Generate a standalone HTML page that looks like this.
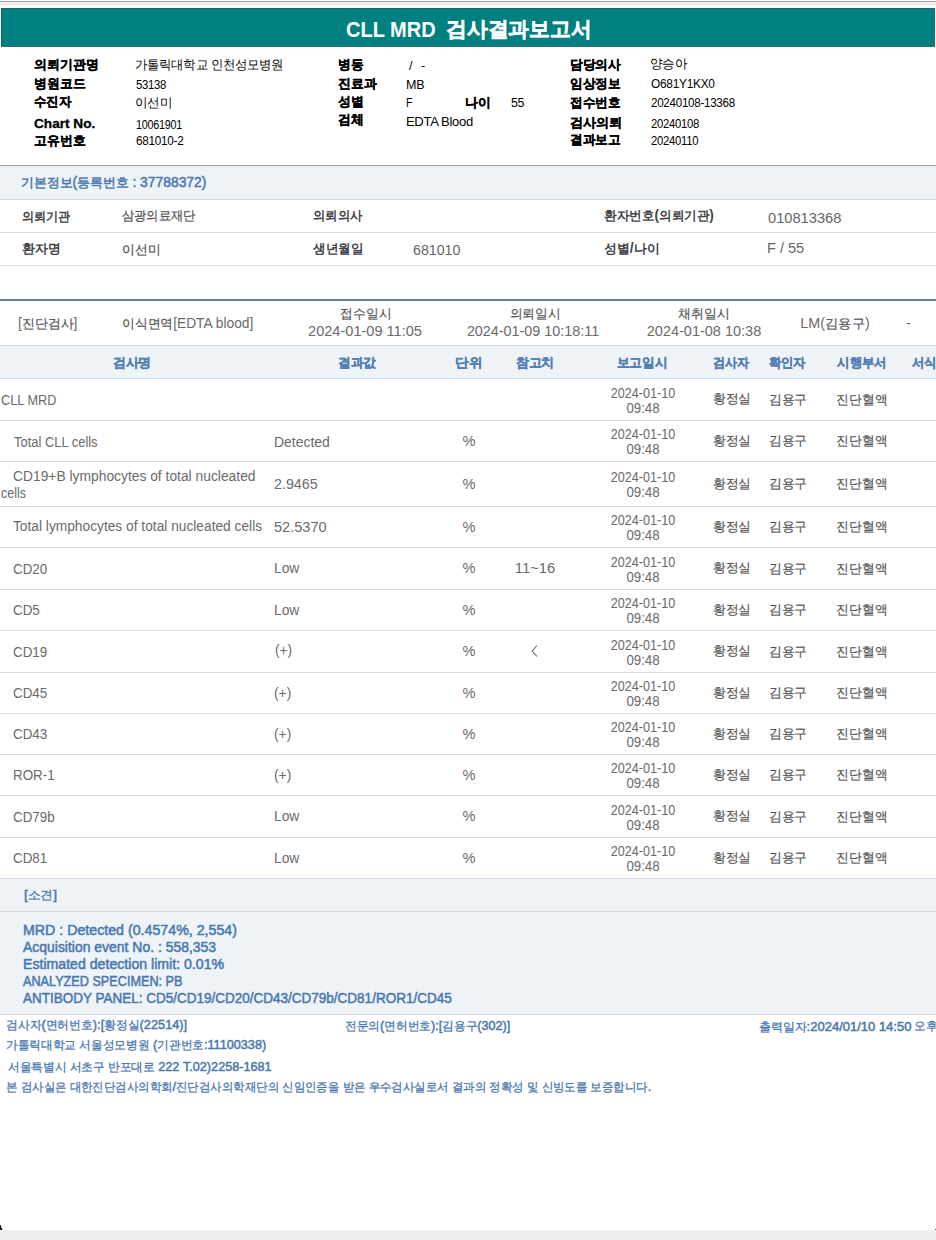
<!DOCTYPE html>
<html><head><meta charset="utf-8">
<style>
html,body{margin:0;padding:0;background:#fff;width:936px;height:1240px;overflow:hidden;position:relative;font-family:"Liberation Sans",sans-serif;}
.a{position:absolute;white-space:nowrap;}
.ln{position:absolute;left:0;width:936px;height:1px;}
.bg{position:absolute;left:0;width:936px;background:#eef3f8;}
.s1{font-size:12.5px;line-height:14px;color:#000;}
.s1.b{font-weight:bold;-webkit-text-stroke:0.3px #000;}
.s1.v{font-size:12.5px;letter-spacing:-0.3px;}
.s2{font-size:14px;line-height:15px;}
.s2 .k{font-size:13px;}
.s2.hd{color:#4a78b0;font-weight:normal;font-size:14px;-webkit-text-stroke:0.5px #4a78b0;}
.s2.hd .k{font-size:13px;}
.s2.lb{color:#404349;font-weight:bold;}
.s2.vl{color:#666;}
.s2.vl .k{color:#555;-webkit-text-stroke:0.25px #555;}
.tb{font-size:14px;line-height:15px;color:#6a6a6a;}
.tb .k{font-size:13px;color:#555;-webkit-text-stroke:0.2px #555;}
.th{font-size:13px;line-height:15px;color:#5580b5;font-weight:bold;-webkit-text-stroke:0.3px #5580b5;}
.sgt{font-size:14px;line-height:17px;color:#4a78b0;font-weight:normal;-webkit-text-stroke:0.5px #4a78b0;}
.ft{font-size:13px;line-height:15px;color:#4a78b0;font-weight:normal;-webkit-text-stroke:0.5px #4a78b0;}
.ft .k{font-size:12px;font-weight:normal;-webkit-text-stroke:0.3px #4a78b0;}
.tt{font-size:21px;line-height:24px;color:#fff;font-weight:bold;}
</style></head><body>
<div class="a" style="left:0;top:1px;width:936px;height:1px;background:#a6a6a6"></div>
<div class="a" style="left:0;top:2px;width:936px;height:4px;background:#eef0f0"></div>
<div class="a" style="left:1px;top:8px;width:934px;height:39px;background:#008080;box-shadow:inset 1px 1px 0 #0a6a6c, inset -1px -1px 0 #2a7070"></div>
<div class="bg" style="top:166px;height:33px"></div>
<div class="a" style="left:0;top:166px;width:936px;height:2px;background:#eceeef"></div>
<div class="bg" style="top:346px;height:32px"></div>
<div class="bg" style="top:879px;height:135px"></div>
<div class="a" style="left:0;top:299px;width:936px;height:2px;background:#64809e"></div>
<div class="a" style="left:0;top:1230px;width:936px;height:10px;background:#efefef"></div>
<div class="ln" style="top:165px;background:#a0a0a0"></div>
<div class="ln" style="top:199px;background:#d3d9e0"></div>
<div class="ln" style="top:232px;background:#dcdcdc"></div>
<div class="ln" style="top:265px;background:#dcdcdc"></div>
<div class="ln" style="top:345px;background:#d3d9e0"></div>
<div class="ln" style="top:378px;background:#d3d9e0"></div>
<div class="ln" style="top:878px;background:#d3d9e0"></div>
<div class="ln" style="top:911px;background:#d3d9e0"></div>
<div class="ln" style="top:1014px;background:#d3d9e0"></div>
<div class="ln" style="top:420px;background:#dcdcdc"></div>
<div class="ln" style="top:461px;background:#dcdcdc"></div>
<div class="ln" style="top:506px;background:#dcdcdc"></div>
<div class="ln" style="top:547px;background:#dcdcdc"></div>
<div class="ln" style="top:589px;background:#dcdcdc"></div>
<div class="ln" style="top:630px;background:#dcdcdc"></div>
<div class="ln" style="top:672px;background:#dcdcdc"></div>
<div class="ln" style="top:713px;background:#dcdcdc"></div>
<div class="ln" style="top:754px;background:#dcdcdc"></div>
<div class="ln" style="top:795px;background:#dcdcdc"></div>
<div class="ln" style="top:837px;background:#dcdcdc"></div>
<div id="tt1" class="a tt" style="left:346.12px;top:18.08px;transform:scaleX(0.9099);transform-origin:0 50%;font-size:22px;">CLL MRD</div>
<div id="tt2" class="a tt" style="left:445.8px;top:17.04px;transform:scaleX(0.9903);transform-origin:0 50%;-webkit-text-stroke:0.5px #fff;"><span class="k">검사결과보고서</span></div>
<div id="s1l0" class="a s1 b" style="left:33.88px;top:57.76px;transform:scaleX(0.9921);transform-origin:0 50%;"><span class="k">의뢰기관명</span></div>
<div id="s1l1" class="a s1 b" style="left:33.88px;top:76.52px;transform:scaleX(0.9913);transform-origin:0 50%;"><span class="k">병원코드</span></div>
<div id="s1l2" class="a s1 b" style="left:33.88px;top:95.44px;transform:scaleX(0.9593);transform-origin:0 50%;"><span class="k">수진자</span></div>
<div id="s1l3" class="a s1 b" style="left:33.88px;top:116.56px;transform:scaleX(1.0900);transform-origin:0 50%;">Chart No.</div>
<div id="s1l4" class="a s1 b" style="left:33.88px;top:133.88px;transform:scaleX(0.9913);transform-origin:0 50%;"><span class="k">고유번호</span></div>
<div id="s1l5" class="a s1 b" style="left:337.6px;top:58.0px;transform:scaleX(0.9843);transform-origin:0 50%;"><span class="k">병동</span></div>
<div id="s1l6" class="a s1 b" style="left:337.6px;top:76.52px;transform:scaleX(0.9894);transform-origin:0 50%;"><span class="k">진료과</span></div>
<div id="s1l7" class="a s1 b" style="left:337.6px;top:95.44px;transform:scaleX(0.9924);transform-origin:0 50%;"><span class="k">성별</span></div>
<div id="s1l8" class="a s1 b" style="left:337.6px;top:113.24px;transform:scaleX(0.9859);transform-origin:0 50%;"><span class="k">검체</span></div>
<div id="s1l9" class="a s1 b" style="left:464.6px;top:96.0px;transform:scaleX(0.9840);transform-origin:0 50%;"><span class="k">나이</span></div>
<div id="s1l10" class="a s1 b" style="left:569.84px;top:58.0px;transform:scaleX(0.9751);transform-origin:0 50%;"><span class="k">담당의사</span></div>
<div id="s1l11" class="a s1 b" style="left:569.84px;top:76.92px;transform:scaleX(0.9747);transform-origin:0 50%;"><span class="k">임상정보</span></div>
<div id="s1l12" class="a s1 b" style="left:569.84px;top:95.84px;transform:scaleX(0.9747);transform-origin:0 50%;"><span class="k">접수번호</span></div>
<div id="s1l13" class="a s1 b" style="left:569.84px;top:115.84px;transform:scaleX(1.0124);transform-origin:0 50%;"><span class="k">검사의뢰</span></div>
<div id="s1l14" class="a s1 b" style="left:569.84px;top:133.04px;transform:scaleX(0.9731);transform-origin:0 50%;"><span class="k">결과보고</span></div>
<div id="s1v0" class="a s1 v" style="left:135.0px;top:58.04px;transform:scaleX(0.9541);transform-origin:0 50%;"><span class="k">가톨릭대학교 인천성모병원</span></div>
<div id="s1v1" class="a s1 v" style="left:135.8px;top:77.56px;transform:scaleX(0.9062);transform-origin:0 50%;">53138</div>
<div id="s1v2" class="a s1 v" style="left:135.0px;top:95.68px;transform:scaleX(0.9706);transform-origin:0 50%;"><span class="k">이선미</span></div>
<div id="s1v3" class="a s1 v" style="left:135.8px;top:117.64px;transform:scaleX(0.8644);transform-origin:0 50%;">10061901</div>
<div id="s1v4" class="a s1 v" style="left:135.8px;top:134.2px;transform:scaleX(0.9400);transform-origin:0 50%;">681010-2</div>
<div id="s1v5" class="a s1 v" style="left:409.12px;top:58.68px;transform-origin:0 50%;letter-spacing:2.5px;">/ -</div>
<div id="s1v6" class="a s1 v" style="left:406.12px;top:77.76px;transform:scaleX(1.0023);transform-origin:0 50%;">MB</div>
<div id="s1v7" class="a s1 v" style="left:406.12px;top:96.04px;transform:scaleX(0.8571);transform-origin:0 50%;">F</div>
<div id="s1v8" class="a s1 v" style="left:511.16px;top:96.04px;transform:scaleX(0.9887);transform-origin:0 50%;">55</div>
<div id="s1v9" class="a s1 v" style="left:406.12px;top:115.08px;transform:scaleX(1.0419);transform-origin:0 50%;">EDTA Blood</div>
<div id="s1v10" class="a s1 v" style="left:649.52px;top:57.0px;transform:scaleX(0.9662);transform-origin:0 50%;"><span class="k">양승아</span></div>
<div id="s1v11" class="a s1 v" style="left:651.12px;top:76.8px;transform:scaleX(0.9524);transform-origin:0 50%;">O681Y1KX0</div>
<div id="s1v12" class="a s1 v" style="left:651.12px;top:96.4px;transform:scaleX(0.9284);transform-origin:0 50%;">20240108-13368</div>
<div id="s1v13" class="a s1 v" style="left:651.12px;top:116.92px;transform:scaleX(0.9038);transform-origin:0 50%;">20240108</div>
<div id="s1v14" class="a s1 v" style="left:651.12px;top:134.4px;transform:scaleX(0.9038);transform-origin:0 50%;">20240110</div>
<div id="s2h" class="a s2 hd" style="left:21.2px;top:175.24px;transform:scaleX(0.9897);transform-origin:0 50%;"><span class="k">기본정보</span>(<span class="k">등록번호</span> : 37788372)</div>
<div id="s2a" class="a s2 lb" style="left:22.32px;top:209.12px;transform:scaleX(0.9349);transform-origin:0 50%;"><span class="k">의뢰기관</span></div>
<div id="s2b" class="a s2 vl" style="left:122.48px;top:208.0px;transform:scaleX(0.9410);transform-origin:0 50%;"><span class="k">삼광의료재단</span></div>
<div id="s2c" class="a s2 lb" style="left:312.8px;top:208.48px;transform:scaleX(0.9501);transform-origin:0 50%;"><span class="k">의뢰의사</span></div>
<div id="s2d" class="a s2 lb" style="left:603.64px;top:208.16px;transform:scaleX(0.9692);transform-origin:0 50%;"><span class="k">환자번호</span>(<span class="k">의뢰기관</span>)</div>
<div id="s2e" class="a s2 vl" style="left:767.84px;top:210.56px;transform:scaleX(1.0464);transform-origin:0 50%;">010813368</div>
<div id="s2f" class="a s2 lb" style="left:22.32px;top:241.48px;transform:scaleX(0.9890);transform-origin:0 50%;"><span class="k">환자명</span></div>
<div id="s2g" class="a s2 vl" style="left:121.68px;top:242.12px;transform:scaleX(0.9861);transform-origin:0 50%;"><span class="k">이선미</span></div>
<div id="s2h2" class="a s2 lb" style="left:312.8px;top:240.84px;transform:scaleX(0.9680);transform-origin:0 50%;"><span class="k">생년월일</span></div>
<div id="s2i" class="a s2 vl" style="left:413.0px;top:242.76px;transform:scaleX(1.0154);transform-origin:0 50%;">681010</div>
<div id="s2j" class="a s2 lb" style="left:603.64px;top:241.48px;transform:scaleX(0.9909);transform-origin:0 50%;"><span class="k">성별</span>/<span class="k">나이</span></div>
<div id="s2k" class="a s2 vl" style="left:767.04px;top:241.0px;transform:scaleX(1.0387);transform-origin:0 50%;">F / 55</div>
<div id="s3a" class="a tb" style="left:18.36px;top:315.52px;transform:scaleX(0.9937);transform-origin:0 50%;">[<span class="k">진단검사</span>]</div>
<div id="s3b" class="a tb" style="left:121.84px;top:315.52px;transform:scaleX(0.9839);transform-origin:0 50%;"><span class="k">이식면역</span>[EDTA blood]</div>
<div id="s3c1" class="a tb" style="left:366.26px;top:306.0px;transform:translateX(-50%) scaleX(0.9810);transform-origin:50% 50%;"><span class="k">접수일시</span></div>
<div id="s3c2" class="a tb" style="left:365.46px;top:324.4px;transform:translateX(-50%) scaleX(1.0397);transform-origin:50% 50%;">2024-01-09 11:05</div>
<div id="s3d1" class="a tb" style="left:535.2px;top:306.0px;transform:translateX(-50%) scaleX(0.9804);transform-origin:50% 50%;"><span class="k">의뢰일시</span></div>
<div id="s3d2" class="a tb" style="left:533.32px;top:324.4px;transform:translateX(-50%) scaleX(1.0254);transform-origin:50% 50%;">2024-01-09 10:18:11</div>
<div id="s3e1" class="a tb" style="left:704.06px;top:306.0px;transform:translateX(-50%) scaleX(0.9899);transform-origin:50% 50%;"><span class="k">채취일시</span></div>
<div id="s3e2" class="a tb" style="left:703.68px;top:324.4px;transform:translateX(-50%) scaleX(1.0358);transform-origin:50% 50%;">2024-01-08 10:38</div>
<div id="s3f" class="a tb" style="left:834.56px;top:316.0px;transform:translateX(-50%) scaleX(1.0249);transform-origin:50% 50%;">LM(<span class="k">김용구</span>)</div>
<div id="s3g" class="a tb" style="left:908.7px;top:316.0px;transform:translateX(-50%);transform-origin:50% 50%;">-</div>
<div id="th0" class="a th" style="left:132.36px;top:355.08px;transform:translateX(-50%) scaleX(0.9939);transform-origin:50% 50%;"><span class="k">검사명</span></div>
<div id="th1" class="a th" style="left:356.9px;top:355.48px;transform:translateX(-50%) scaleX(0.9751);transform-origin:50% 50%;"><span class="k">결과값</span></div>
<div id="th2" class="a th" style="left:469.48px;top:355.48px;transform:translateX(-50%) scaleX(1.0435);transform-origin:50% 50%;"><span class="k">단위</span></div>
<div id="th3" class="a th" style="left:534.88px;top:355.08px;transform:translateX(-50%) scaleX(0.9981);transform-origin:50% 50%;"><span class="k">참고치</span></div>
<div id="th4" class="a th" style="left:642.44px;top:355.48px;transform:translateX(-50%) scaleX(0.9778);transform-origin:50% 50%;"><span class="k">보고일시</span></div>
<div id="th5" class="a th" style="left:731.48px;top:355.08px;transform:translateX(-50%) scaleX(0.9296);transform-origin:50% 50%;"><span class="k">검사자</span></div>
<div id="th6" class="a th" style="left:787.0px;top:355.08px;transform:translateX(-50%) scaleX(0.9474);transform-origin:50% 50%;"><span class="k">확인자</span></div>
<div id="th7" class="a th" style="left:861.86px;top:355.08px;transform:translateX(-50%) scaleX(0.9579);transform-origin:50% 50%;"><span class="k">시행부서</span></div>
<div id="th8" class="a th" style="left:924px;top:355.08px;transform:translateX(-50%) scaleX(0.9579);transform-origin:50% 50%;"><span class="k">서식</span></div>
<div id="r0n" class="a tb" style="left:0.52px;top:392.78px;transform:scaleX(0.9113);transform-origin:0 50%;">CLL MRD</div>
<div id="r0d1" class="a tb" style="left:642.56px;top:385.52px;transform:translateX(-50%) scaleX(0.8995);transform-origin:50% 50%;">2024-01-10</div>
<div id="r0d2" class="a tb" style="left:642.88px;top:400.94px;transform:translateX(-50%) scaleX(0.9483);transform-origin:50% 50%;">09:48</div>
<div id="r0p1" class="a tb" style="left:731.8px;top:391.02px;transform:translateX(-50%) scaleX(0.9821);transform-origin:50% 50%;"><span class="k">황정실</span></div>
<div id="r0p2" class="a tb" style="left:787.8px;top:391.5px;transform:translateX(-50%) scaleX(0.9897);transform-origin:50% 50%;"><span class="k">김용구</span></div>
<div id="r0p3" class="a tb" style="left:862.24px;top:391.5px;transform:translateX(-50%) scaleX(0.9814);transform-origin:50% 50%;"><span class="k">진단혈액</span></div>
<div id="r1n" class="a tb" style="left:13.8px;top:434.76px;transform:scaleX(0.9234);transform-origin:0 50%;">Total CLL cells</div>
<div id="r1r" class="a tb" style="left:273.52px;top:435.08px;transform:scaleX(0.9947);transform-origin:0 50%;">Detected</div>
<div id="r1u" class="a tb" style="left:469.2px;top:433.96px;transform:translateX(-50%) scaleX(1.0402);transform-origin:50% 50%;">%</div>
<div id="r1d1" class="a tb" style="left:642.56px;top:427.02px;transform:translateX(-50%) scaleX(0.8995);transform-origin:50% 50%;">2024-01-10</div>
<div id="r1d2" class="a tb" style="left:642.88px;top:442.44px;transform:translateX(-50%) scaleX(0.9483);transform-origin:50% 50%;">09:48</div>
<div id="r1p1" class="a tb" style="left:731.8px;top:432.52px;transform:translateX(-50%) scaleX(0.9821);transform-origin:50% 50%;"><span class="k">황정실</span></div>
<div id="r1p2" class="a tb" style="left:787.8px;top:433.0px;transform:translateX(-50%) scaleX(0.9897);transform-origin:50% 50%;"><span class="k">김용구</span></div>
<div id="r1p3" class="a tb" style="left:862.24px;top:433.0px;transform:translateX(-50%) scaleX(0.9814);transform-origin:50% 50%;"><span class="k">진단혈액</span></div>
<div id="r2n" class="a tb" style="left:12.84px;top:468.96px;transform:scaleX(0.9877);transform-origin:0 50%;">CD19+B lymphocytes of total nucleated</div>
<div id="r2n2" class="a tb" style="left:1.0px;top:486.4px;transform:scaleX(0.8889);transform-origin:0 50%;">cells</div>
<div id="r2r" class="a tb" style="left:274.0px;top:477.44px;transform:scaleX(1.0204);transform-origin:0 50%;">2.9465</div>
<div id="r2u" class="a tb" style="left:469.2px;top:476.96px;transform:translateX(-50%) scaleX(1.0402);transform-origin:50% 50%;">%</div>
<div id="r2d1" class="a tb" style="left:642.56px;top:470.02px;transform:translateX(-50%) scaleX(0.8995);transform-origin:50% 50%;">2024-01-10</div>
<div id="r2d2" class="a tb" style="left:642.88px;top:485.44px;transform:translateX(-50%) scaleX(0.9483);transform-origin:50% 50%;">09:48</div>
<div id="r2p1" class="a tb" style="left:731.8px;top:475.52px;transform:translateX(-50%) scaleX(0.9821);transform-origin:50% 50%;"><span class="k">황정실</span></div>
<div id="r2p2" class="a tb" style="left:787.8px;top:476.0px;transform:translateX(-50%) scaleX(0.9897);transform-origin:50% 50%;"><span class="k">김용구</span></div>
<div id="r2p3" class="a tb" style="left:862.24px;top:476.0px;transform:translateX(-50%) scaleX(0.9814);transform-origin:50% 50%;"><span class="k">진단혈액</span></div>
<div id="r3n" class="a tb" style="left:12.84px;top:519.0px;transform:scaleX(0.9818);transform-origin:0 50%;">Total lymphocytes of total nucleated cells</div>
<div id="r3r" class="a tb" style="left:274.0px;top:520.28px;transform:scaleX(1.0408);transform-origin:0 50%;">52.5370</div>
<div id="r3u" class="a tb" style="left:469.2px;top:519.96px;transform:translateX(-50%) scaleX(1.0402);transform-origin:50% 50%;">%</div>
<div id="r3d1" class="a tb" style="left:642.56px;top:513.02px;transform:translateX(-50%) scaleX(0.8995);transform-origin:50% 50%;">2024-01-10</div>
<div id="r3d2" class="a tb" style="left:642.88px;top:528.44px;transform:translateX(-50%) scaleX(0.9483);transform-origin:50% 50%;">09:48</div>
<div id="r3p1" class="a tb" style="left:731.8px;top:518.52px;transform:translateX(-50%) scaleX(0.9821);transform-origin:50% 50%;"><span class="k">황정실</span></div>
<div id="r3p2" class="a tb" style="left:787.8px;top:519.0px;transform:translateX(-50%) scaleX(0.9897);transform-origin:50% 50%;"><span class="k">김용구</span></div>
<div id="r3p3" class="a tb" style="left:862.24px;top:519.0px;transform:translateX(-50%) scaleX(0.9814);transform-origin:50% 50%;"><span class="k">진단혈액</span></div>
<div id="r4n" class="a tb" style="left:12.84px;top:561.62px;transform:scaleX(0.9577);transform-origin:0 50%;">CD20</div>
<div id="r4r" class="a tb" style="left:273.52px;top:561.3px;transform:scaleX(0.9863);transform-origin:0 50%;">Low</div>
<div id="r4u" class="a tb" style="left:469.2px;top:561.46px;transform:translateX(-50%) scaleX(1.0402);transform-origin:50% 50%;">%</div>
<div id="r4f" class="a tb" style="left:535.12px;top:561.3px;transform:translateX(-50%) scaleX(1.0573);transform-origin:50% 50%;">11~16</div>
<div id="r4d1" class="a tb" style="left:642.56px;top:554.52px;transform:translateX(-50%) scaleX(0.8995);transform-origin:50% 50%;">2024-01-10</div>
<div id="r4d2" class="a tb" style="left:642.88px;top:569.94px;transform:translateX(-50%) scaleX(0.9483);transform-origin:50% 50%;">09:48</div>
<div id="r4p1" class="a tb" style="left:731.8px;top:560.02px;transform:translateX(-50%) scaleX(0.9821);transform-origin:50% 50%;"><span class="k">황정실</span></div>
<div id="r4p2" class="a tb" style="left:787.8px;top:560.5px;transform:translateX(-50%) scaleX(0.9897);transform-origin:50% 50%;"><span class="k">김용구</span></div>
<div id="r4p3" class="a tb" style="left:862.24px;top:560.5px;transform:translateX(-50%) scaleX(0.9814);transform-origin:50% 50%;"><span class="k">진단혈액</span></div>
<div id="r5n" class="a tb" style="left:12.84px;top:603.12px;transform:scaleX(0.9577);transform-origin:0 50%;">CD5</div>
<div id="r5r" class="a tb" style="left:273.52px;top:602.8px;transform:scaleX(0.9863);transform-origin:0 50%;">Low</div>
<div id="r5u" class="a tb" style="left:469.2px;top:602.96px;transform:translateX(-50%) scaleX(1.0402);transform-origin:50% 50%;">%</div>
<div id="r5d1" class="a tb" style="left:642.56px;top:596.02px;transform:translateX(-50%) scaleX(0.8995);transform-origin:50% 50%;">2024-01-10</div>
<div id="r5d2" class="a tb" style="left:642.88px;top:611.44px;transform:translateX(-50%) scaleX(0.9483);transform-origin:50% 50%;">09:48</div>
<div id="r5p1" class="a tb" style="left:731.8px;top:601.52px;transform:translateX(-50%) scaleX(0.9821);transform-origin:50% 50%;"><span class="k">황정실</span></div>
<div id="r5p2" class="a tb" style="left:787.8px;top:602.0px;transform:translateX(-50%) scaleX(0.9897);transform-origin:50% 50%;"><span class="k">김용구</span></div>
<div id="r5p3" class="a tb" style="left:862.24px;top:602.0px;transform:translateX(-50%) scaleX(0.9814);transform-origin:50% 50%;"><span class="k">진단혈액</span></div>
<div id="r6n" class="a tb" style="left:12.84px;top:644.62px;transform:scaleX(0.9577);transform-origin:0 50%;">CD19</div>
<div id="r6r" class="a tb" style="left:274.96px;top:643.18px;transform:scaleX(0.9822);transform-origin:0 50%;">(+)</div>
<div id="r6u" class="a tb" style="left:469.2px;top:644.46px;transform:translateX(-50%) scaleX(1.0402);transform-origin:50% 50%;">%</div>
<div id="r6d1" class="a tb" style="left:642.56px;top:637.52px;transform:translateX(-50%) scaleX(0.8995);transform-origin:50% 50%;">2024-01-10</div>
<div id="r6d2" class="a tb" style="left:642.88px;top:652.94px;transform:translateX(-50%) scaleX(0.9483);transform-origin:50% 50%;">09:48</div>
<div id="r6p1" class="a tb" style="left:731.8px;top:643.02px;transform:translateX(-50%) scaleX(0.9821);transform-origin:50% 50%;"><span class="k">황정실</span></div>
<div id="r6p2" class="a tb" style="left:787.8px;top:643.5px;transform:translateX(-50%) scaleX(0.9897);transform-origin:50% 50%;"><span class="k">김용구</span></div>
<div id="r6p3" class="a tb" style="left:862.24px;top:643.5px;transform:translateX(-50%) scaleX(0.9814);transform-origin:50% 50%;"><span class="k">진단혈액</span></div>
<div id="r7n" class="a tb" style="left:12.84px;top:686.12px;transform:scaleX(0.9577);transform-origin:0 50%;">CD45</div>
<div id="r7r" class="a tb" style="left:273.52px;top:685.8px;transform:scaleX(0.9863);transform-origin:0 50%;">(+)</div>
<div id="r7u" class="a tb" style="left:469.2px;top:685.96px;transform:translateX(-50%) scaleX(1.0402);transform-origin:50% 50%;">%</div>
<div id="r7d1" class="a tb" style="left:642.56px;top:679.02px;transform:translateX(-50%) scaleX(0.8995);transform-origin:50% 50%;">2024-01-10</div>
<div id="r7d2" class="a tb" style="left:642.88px;top:694.44px;transform:translateX(-50%) scaleX(0.9483);transform-origin:50% 50%;">09:48</div>
<div id="r7p1" class="a tb" style="left:731.8px;top:684.52px;transform:translateX(-50%) scaleX(0.9821);transform-origin:50% 50%;"><span class="k">황정실</span></div>
<div id="r7p2" class="a tb" style="left:787.8px;top:685.0px;transform:translateX(-50%) scaleX(0.9897);transform-origin:50% 50%;"><span class="k">김용구</span></div>
<div id="r7p3" class="a tb" style="left:862.24px;top:685.0px;transform:translateX(-50%) scaleX(0.9814);transform-origin:50% 50%;"><span class="k">진단혈액</span></div>
<div id="r8n" class="a tb" style="left:12.84px;top:727.12px;transform:scaleX(0.9577);transform-origin:0 50%;">CD43</div>
<div id="r8r" class="a tb" style="left:273.52px;top:726.8px;transform:scaleX(0.9863);transform-origin:0 50%;">(+)</div>
<div id="r8u" class="a tb" style="left:469.2px;top:726.96px;transform:translateX(-50%) scaleX(1.0402);transform-origin:50% 50%;">%</div>
<div id="r8d1" class="a tb" style="left:642.56px;top:720.02px;transform:translateX(-50%) scaleX(0.8995);transform-origin:50% 50%;">2024-01-10</div>
<div id="r8d2" class="a tb" style="left:642.88px;top:735.44px;transform:translateX(-50%) scaleX(0.9483);transform-origin:50% 50%;">09:48</div>
<div id="r8p1" class="a tb" style="left:731.8px;top:725.52px;transform:translateX(-50%) scaleX(0.9821);transform-origin:50% 50%;"><span class="k">황정실</span></div>
<div id="r8p2" class="a tb" style="left:787.8px;top:726.0px;transform:translateX(-50%) scaleX(0.9897);transform-origin:50% 50%;"><span class="k">김용구</span></div>
<div id="r8p3" class="a tb" style="left:862.24px;top:726.0px;transform:translateX(-50%) scaleX(0.9814);transform-origin:50% 50%;"><span class="k">진단혈액</span></div>
<div id="r9n" class="a tb" style="left:12.84px;top:768.12px;transform:scaleX(0.9577);transform-origin:0 50%;">ROR-1</div>
<div id="r9r" class="a tb" style="left:273.52px;top:767.8px;transform:scaleX(0.9863);transform-origin:0 50%;">(+)</div>
<div id="r9u" class="a tb" style="left:469.2px;top:767.96px;transform:translateX(-50%) scaleX(1.0402);transform-origin:50% 50%;">%</div>
<div id="r9d1" class="a tb" style="left:642.56px;top:761.02px;transform:translateX(-50%) scaleX(0.8995);transform-origin:50% 50%;">2024-01-10</div>
<div id="r9d2" class="a tb" style="left:642.88px;top:776.44px;transform:translateX(-50%) scaleX(0.9483);transform-origin:50% 50%;">09:48</div>
<div id="r9p1" class="a tb" style="left:731.8px;top:766.52px;transform:translateX(-50%) scaleX(0.9821);transform-origin:50% 50%;"><span class="k">황정실</span></div>
<div id="r9p2" class="a tb" style="left:787.8px;top:767.0px;transform:translateX(-50%) scaleX(0.9897);transform-origin:50% 50%;"><span class="k">김용구</span></div>
<div id="r9p3" class="a tb" style="left:862.24px;top:767.0px;transform:translateX(-50%) scaleX(0.9814);transform-origin:50% 50%;"><span class="k">진단혈액</span></div>
<div id="r10n" class="a tb" style="left:12.84px;top:809.62px;transform:scaleX(0.9577);transform-origin:0 50%;">CD79b</div>
<div id="r10r" class="a tb" style="left:273.52px;top:809.3px;transform:scaleX(0.9863);transform-origin:0 50%;">Low</div>
<div id="r10u" class="a tb" style="left:469.2px;top:809.46px;transform:translateX(-50%) scaleX(1.0402);transform-origin:50% 50%;">%</div>
<div id="r10d1" class="a tb" style="left:642.56px;top:802.52px;transform:translateX(-50%) scaleX(0.8995);transform-origin:50% 50%;">2024-01-10</div>
<div id="r10d2" class="a tb" style="left:642.88px;top:817.94px;transform:translateX(-50%) scaleX(0.9483);transform-origin:50% 50%;">09:48</div>
<div id="r10p1" class="a tb" style="left:731.8px;top:808.02px;transform:translateX(-50%) scaleX(0.9821);transform-origin:50% 50%;"><span class="k">황정실</span></div>
<div id="r10p2" class="a tb" style="left:787.8px;top:808.5px;transform:translateX(-50%) scaleX(0.9897);transform-origin:50% 50%;"><span class="k">김용구</span></div>
<div id="r10p3" class="a tb" style="left:862.24px;top:808.5px;transform:translateX(-50%) scaleX(0.9814);transform-origin:50% 50%;"><span class="k">진단혈액</span></div>
<div id="r11n" class="a tb" style="left:12.84px;top:851.12px;transform:scaleX(0.9577);transform-origin:0 50%;">CD81</div>
<div id="r11r" class="a tb" style="left:273.52px;top:850.8px;transform:scaleX(0.9863);transform-origin:0 50%;">Low</div>
<div id="r11u" class="a tb" style="left:469.2px;top:850.96px;transform:translateX(-50%) scaleX(1.0402);transform-origin:50% 50%;">%</div>
<div id="r11d1" class="a tb" style="left:642.56px;top:844.02px;transform:translateX(-50%) scaleX(0.8995);transform-origin:50% 50%;">2024-01-10</div>
<div id="r11d2" class="a tb" style="left:642.88px;top:859.44px;transform:translateX(-50%) scaleX(0.9483);transform-origin:50% 50%;">09:48</div>
<div id="r11p1" class="a tb" style="left:731.8px;top:849.52px;transform:translateX(-50%) scaleX(0.9821);transform-origin:50% 50%;"><span class="k">황정실</span></div>
<div id="r11p2" class="a tb" style="left:787.8px;top:850.0px;transform:translateX(-50%) scaleX(0.9897);transform-origin:50% 50%;"><span class="k">김용구</span></div>
<div id="r11p3" class="a tb" style="left:862.24px;top:850.0px;transform:translateX(-50%) scaleX(0.9814);transform-origin:50% 50%;"><span class="k">진단혈액</span></div>
<div id="sg0" class="a ft" style="left:23.8px;top:886.72px;transform:scaleX(1.0543);transform-origin:0 50%;">[<span class="k">소견</span>]</div>
<div id="sg1" class="a sgt" style="left:22.52px;top:921.8px;transform:scaleX(1.0144);transform-origin:0 50%;">MRD : Detected (0.4574%, 2,554)</div>
<div id="sg2" class="a sgt" style="left:22.52px;top:938.8px;transform:scaleX(0.9963);transform-origin:0 50%;">Acquisition event No. : 558,353</div>
<div id="sg3" class="a sgt" style="left:22.52px;top:955.8px;transform:scaleX(1.0093);transform-origin:0 50%;">Estimated detection limit: 0.01%</div>
<div id="sg4" class="a sgt" style="left:22.52px;top:972.8px;transform:scaleX(0.9042);transform-origin:0 50%;">ANALYZED SPECIMEN: PB</div>
<div id="sg5" class="a sgt" style="left:22.52px;top:989.8px;transform:scaleX(0.9643);transform-origin:0 50%;">ANTIBODY PANEL: CD5/CD19/CD20/CD43/CD79b/CD81/ROR1/CD45</div>
<div id="f1" class="a ft" style="left:6.2px;top:1017.12px;transform:scaleX(0.9828);transform-origin:0 50%;"><span class="k">검사자</span>(<span class="k">면허번호</span>):[<span class="k">황정실</span>(22514)]</div>
<div id="f2" class="a ft" style="left:344.8px;top:1017.52px;transform:scaleX(0.9733);transform-origin:0 50%;"><span class="k">전문의</span>(<span class="k">면허번호</span>):[<span class="k">김용구</span>(302)]</div>
<div id="f3" class="a ft" style="left:758.6px;top:1018.8px;transform-origin:0 50%;"><span class="k">출력일자</span>:2024/01/10 14:50</div>
<div id="f3b" class="a ft" style="left:914px;top:1017.52px;transform:scaleX(0.9733);transform-origin:0 50%;"><span class="k">오후</span></div>
<div id="f4" class="a ft" style="left:6.2px;top:1036.8px;transform:scaleX(0.9738);transform-origin:0 50%;"><span class="k">가톨릭대학교 서울성모병원</span> (<span class="k">기관번호</span>:11100338)</div>
<div id="f5" class="a ft" style="left:7.8px;top:1059.0px;transform:scaleX(0.9741);transform-origin:0 50%;"><span class="k">서울특별시 서초구 반포대로</span> 222 T.02)2258-1681</div>
<div id="f6" class="a ft" style="left:6.2px;top:1079.28px;transform:scaleX(0.9535);transform-origin:0 50%;"><span class="k">본 검사실은 대한진단검사의학회</span>/<span class="k">진단검사의학재단의 신임인증을 받은 우수검사실로서 결과의 정확성 및 신빙도를 보증합니다</span>.</div>
<svg style="position:absolute;left:530px;top:644px" width="9" height="14" viewBox="0 0 9 14"><path d="M7 1.5 L2.2 7 L7 12.5" fill="none" stroke="#666" stroke-width="1.1"/></svg>
<svg style="position:absolute;left:0;top:1225px" width="3" height="5" viewBox="0 0 3 5"><path d="M0 0 L0.6 0 L2.4 5 L0 5 Z" fill="#111"/></svg>
<div class="a" style="left:935px;top:1229px;width:1px;height:1px;background:#555"></div>
</body></html>
